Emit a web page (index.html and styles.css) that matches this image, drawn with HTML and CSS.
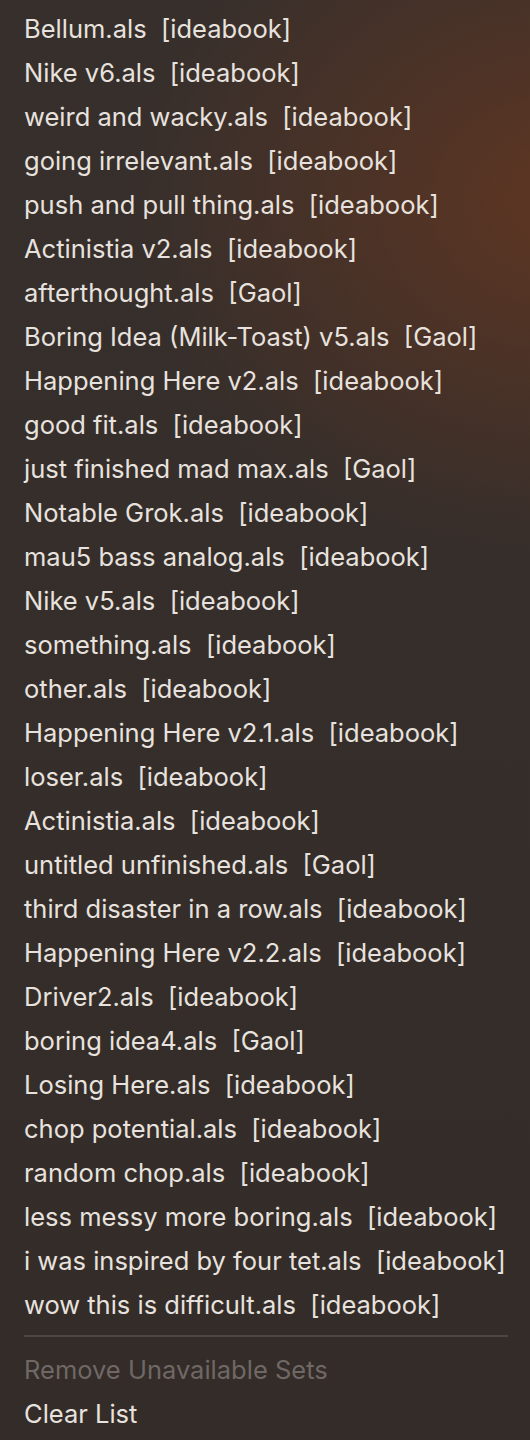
FILE: index.html
```html
<!DOCTYPE html>
<html lang="en">
  <head>
    <meta charset="UTF-8" />
    <meta name="viewport" content="width=device-width, initial-scale=1.0" />
    <title>Recent Sets</title>
    <link rel="stylesheet" href="styles.css">
  </head>
  <body>
    <div class="menu">
      <ul class="menu-list">
        <li class="menu-item">Bellum.als  [ideabook]</li>
        <li class="menu-item">Nike v6.als  [ideabook]</li>
        <li class="menu-item">weird and wacky.als  [ideabook]</li>
        <li class="menu-item">going irrelevant.als  [ideabook]</li>
        <li class="menu-item">push and pull thing.als  [ideabook]</li>
        <li class="menu-item">Actinistia v2.als  [ideabook]</li>
        <li class="menu-item">afterthought.als  [Gaol]</li>
        <li class="menu-item">Boring Idea (Milk-Toast) v5.als  [Gaol]</li>
        <li class="menu-item">Happening Here v2.als  [ideabook]</li>
        <li class="menu-item">good fit.als  [ideabook]</li>
        <li class="menu-item">just finished mad max.als  [Gaol]</li>
        <li class="menu-item">Notable Grok.als  [ideabook]</li>
        <li class="menu-item">mau5 bass analog.als  [ideabook]</li>
        <li class="menu-item">Nike v5.als  [ideabook]</li>
        <li class="menu-item">something.als  [ideabook]</li>
        <li class="menu-item">other.als  [ideabook]</li>
        <li class="menu-item">Happening Here v2.1.als  [ideabook]</li>
        <li class="menu-item">loser.als  [ideabook]</li>
        <li class="menu-item">Actinistia.als  [ideabook]</li>
        <li class="menu-item">untitled unfinished.als  [Gaol]</li>
        <li class="menu-item">third disaster in a row.als  [ideabook]</li>
        <li class="menu-item">Happening Here v2.2.als  [ideabook]</li>
        <li class="menu-item">Driver2.als  [ideabook]</li>
        <li class="menu-item">boring idea4.als  [Gaol]</li>
        <li class="menu-item">Losing Here.als  [ideabook]</li>
        <li class="menu-item">chop potential.als  [ideabook]</li>
        <li class="menu-item">random chop.als  [ideabook]</li>
        <li class="menu-item">less messy more boring.als  [ideabook]</li>
        <li class="menu-item">i was inspired by four tet.als  [ideabook]</li>
        <li class="menu-item">wow this is difficult.als  [ideabook]</li>
      </ul>
      <div class="separator"></div>
      <ul class="menu-list">
        <li class="menu-item disabled">Remove Unavailable Sets</li>
        <li class="menu-item">Clear List</li>
      </ul>
    </div>
  </body>
</html>
```

FILE: styles.css
```css
html,
body {
  margin: 0;
  padding: 0;
  height: 100%;
}

body {
  font-family: Inter, "Noto Sans", sans-serif;
  background-color: #332c29;
}

.menu {
  min-height: 1440px;
  box-sizing: border-box;
  padding: 7px 22px 0 24px;
  background:
    radial-gradient(ellipse 440px 360px at 560px 200px, rgba(96, 54, 34, 0.95), rgba(96, 54, 34, 0) 100%),
    linear-gradient(180deg, #362f2c 0%, #332c29 100%);
  color: #e8e2de;
}

.menu-list {
  list-style: none;
  margin: 0;
  padding: 0;
}

.menu-item {
  height: 44px;
  line-height: 44px;
  font-size: 25.5px;
  white-space: pre;
}

.menu-item.disabled {
  color: #6f6865;
}

.separator {
  height: 2px;
  background-color: #4d4643;
  margin: 8px 0 11px 0;
}
```
